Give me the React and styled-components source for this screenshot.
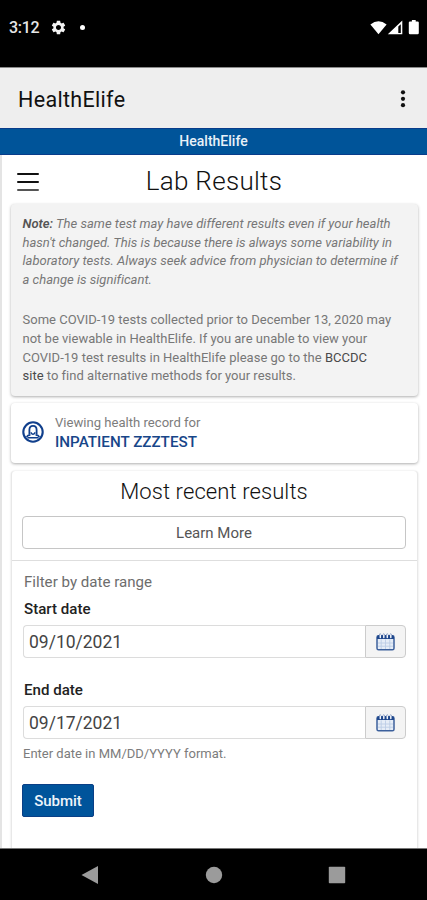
import React, { useState } from 'react';
import styled, { createGlobalStyle } from 'styled-components';

const App = () => {
  const [startDate, setStartDate] = useState('09/10/2021');
  const [endDate, setEndDate] = useState('09/17/2021');

  return (
    <Screen>
      <GlobalStyle />
      <StatusBar>
        <Clock>3:12</Clock>
        <GearIcon />
        <Dot />
        <StatusIcons />
      </StatusBar>

      <AppBar>
        <AppName>HealthElife</AppName>
        <MoreIcon />
      </AppBar>
      <Banner>HealthElife</Banner>

      <Page>
        <TitleRow>
          <MenuButton aria-label="Menu">
            <MenuLine />
            <MenuLine />
            <MenuLine $light />
          </MenuButton>
          <Title>Lab Results</Title>
        </TitleRow>

        <NoteCard>
          <NoteText $italic>
            <b>Note:</b> The same test may have different results even if your health
            <br />
            hasn't changed. This is because there is always some variability in
            <br />
            laboratory tests. Always seek advice from physician to determine if
            <br />a change is significant.
          </NoteText>
          <NoteText>
            Some COVID-19 tests collected prior to December 13, 2020 may
            <br />
            not be viewable in HealthElife. If you are unable to view your
            <br />
            COVID-19 test results in HealthElife please go to the <NoteLink>BCCDC</NoteLink>
            <br />
            <NoteLink>site</NoteLink> to find alternative methods for your results.
          </NoteText>
        </NoteCard>

        <RecordCard>
          <PersonIcon />
          <div>
            <RecordLabel>Viewing health record for</RecordLabel>
            <RecordName>INPATIENT ZZZTEST</RecordName>
          </div>
        </RecordCard>

        <ResultsCard>
          <ResultsHead>
            <ResultsTitle>Most recent results</ResultsTitle>
            <LearnButton>Learn More</LearnButton>
          </ResultsHead>
          <FilterForm onSubmit={(e) => e.preventDefault()}>
            <FilterTitle>Filter by date range</FilterTitle>
            <DateField
              id="start"
              label="Start date"
              value={startDate}
              onChange={setStartDate}
            />
            <DateField
              id="end"
              label="End date"
              value={endDate}
              onChange={setEndDate}
            />
            <Hint>Enter date in MM/DD/YYYY format.</Hint>
            <SubmitButton type="submit">Submit</SubmitButton>
          </FilterForm>
        </ResultsCard>
      </Page>

      <NavBar>
        <svg width="18" height="20" viewBox="0 0 18 20">
          <path d="M0.5 10 L17 1 V19 Z" fill="#9b9b9b" />
        </svg>
        <svg width="18" height="18" viewBox="0 0 18 18">
          <circle cx="9" cy="9" r="8.2" fill="#9b9b9b" />
        </svg>
        <svg width="18" height="18" viewBox="0 0 18 18">
          <rect x="0.8" y="0.8" width="16.4" height="16.4" rx="0.8" fill="#9b9b9b" />
        </svg>
      </NavBar>
    </Screen>
  );
};

export default App;

const DateField = ({ id, label, value, onChange }) => (
  <Field>
    <Label htmlFor={id}>{label}</Label>
    <InputGroup>
      <Input id={id} value={value} onChange={(e) => onChange(e.target.value)} />
      <CalendarButton type="button" aria-label={label}>
        <CalendarIcon />
      </CalendarButton>
    </InputGroup>
  </Field>
);

const GearIcon = () => (
  <svg width="17" height="17" viewBox="0 0 24 24" fill="#f4f4f4">
    <path d="M19.14 12.94c.04-.3.06-.61.06-.94 0-.32-.02-.64-.07-.94l2.03-1.58c.18-.14.23-.41.12-.61l-1.92-3.32c-.12-.22-.37-.29-.59-.22l-2.39.96c-.5-.38-1.03-.7-1.62-.94l-.36-2.54c-.04-.24-.24-.41-.48-.41h-3.84c-.24 0-.43.17-.47.41l-.36 2.54c-.59.24-1.13.57-1.62.94l-2.39-.96c-.22-.08-.47 0-.59.22L2.74 8.87c-.12.21-.08.47.12.61l2.03 1.58c-.05.3-.09.63-.09.94s.02.64.07.94l-2.03 1.58c-.18.14-.23.41-.12.61l1.92 3.32c.12.22.37.29.59.22l2.39-.96c.5.38 1.03.7 1.62.94l.36 2.54c.05.24.24.41.48.41h3.84c.24 0 .44-.17.47-.41l.36-2.54c.59-.24 1.13-.56 1.62-.94l2.39.96c.22.08.47 0 .59-.22l1.92-3.32c.12-.22.07-.47-.12-.61l-2.01-1.58zM12 15.6c-1.98 0-3.6-1.62-3.6-3.6s1.62-3.6 3.6-3.6 3.6 1.62 3.6 3.6-1.62 3.6-3.6 3.6z" />
  </svg>
);

// wifi, signal and battery
const StatusIcons = () => (
  <svg width="50" height="16" viewBox="0 0 50 16" fill="#fff">
    <path d="M0.4 4.4 Q8.5 -1.9 16.6 4.4 L8.5 14.3 Z" />
    <path
      fillRule="evenodd"
      d="M17.8 14.3 L32.3 0.4 V14.3 Z M28.3 6.4 V12.9 H30.8 V4.2 Z"
    />
    <path d="M41.9 0 H45.7 V1.4 H47.6 Q48.8 1.4 48.8 2.6 V13 Q48.8 14.2 47.6 14.2 H40 Q38.8 14.2 38.8 13 V2.6 Q38.8 1.4 40 1.4 H41.9 Z" />
  </svg>
);

const MoreIcon = () => (
  <svg width="6" height="20" viewBox="0 0 6 20" fill="#111">
    <circle cx="3" cy="3.3" r="2.1" />
    <circle cx="3" cy="9.8" r="2.1" />
    <circle cx="3" cy="16.2" r="2.1" />
  </svg>
);

const PersonIcon = () => (
  <svg width="22" height="22" viewBox="0 0 22 22" fill="none" stroke="#103f8c">
    <circle cx="11" cy="11" r="9.7" strokeWidth="2.1" />
    <path
      d="M7.4 13.6 V8.8 Q7.4 4.9 11 4.9 Q14.6 4.9 14.6 8.8 V13.6"
      strokeWidth="1.8"
    />
    <path d="M8.8 11.4 Q11 15.2 13.2 11.4" strokeWidth="1.5" />
    <path d="M4.6 16 Q5.6 14.2 8.4 13.9 M17.4 16 Q16.4 14.2 13.6 13.9 M5.6 16.8 H16.4" strokeWidth="1.6" />
  </svg>
);

const CalendarIcon = () => (
  <svg width="19" height="18" viewBox="0 0 19 18">
    <rect x="1" y="2.8" width="17" height="14" rx="1.6" fill="#e6edf7" stroke="#3c609c" strokeWidth="1.5" />
    <path d="M1 6 V4 Q1 2.2 2.8 2.2 H16.2 Q18 2.2 18 4 V6 Z" fill="#1f478c" />
    <path d="M5.2 6.4 V16 M9.5 6.4 V16 M13.8 6.4 V16 M2 10 H17 M2 13.2 H17" stroke="#bccde5" strokeWidth="0.9" />
    <path d="M4.3 1.6 V4.4 M7.8 1.6 V4.4 M11.3 1.6 V4.4 M14.8 1.6 V4.4" stroke="#f2f5fa" strokeWidth="1.5" strokeLinecap="round" />
    <path d="M3 1.7 Q4.2 -0.1 5.3 1.7 M6.6 1.7 Q7.8 -0.1 8.9 1.7 M10.1 1.7 Q11.3 -0.1 12.4 1.7 M13.6 1.7 Q14.8 -0.1 15.9 1.7" stroke="#6d87b4" strokeWidth="0.8" fill="none" />
  </svg>
);

// Styled Components
const GlobalStyle = createGlobalStyle`
  * {
    box-sizing: border-box;
  }

  body {
    margin: 0;
    background: #fff;
    font-family: Roboto, 'Liberation Sans', sans-serif;
  }

  button,
  input {
    font-family: inherit;
  }
`;

const Screen = styled.div`
  display: flex;
  flex-direction: column;
  width: 427px;
  height: 900px;
  overflow: hidden;
`;

const StatusBar = styled.div`
  display: flex;
  flex: none;
  align-items: center;
  height: 67px;
  padding: 0 7px 12px 9px;
  background: #000;
`;

const Clock = styled.span`
  width: 41px;
  color: #e6e6e6;
  font-size: 16px;
  font-weight: 500;
  line-height: 20px;
  letter-spacing: -0.3px;
`;

const Dot = styled.span`
  width: 5px;
  height: 5px;
  margin: 0 auto 0 13px;
  border-radius: 50%;
  background: #fff;
`;

const AppBar = styled.header`
  display: flex;
  flex: none;
  align-items: center;
  justify-content: space-between;
  height: 61px;
  padding: 2px 21px 0 18px;
  border-top: 1px solid #8a8a8a;
  background: #eee;
`;

const AppName = styled.span`
  color: #111;
  font-size: 21.5px;
  font-weight: 400;
  letter-spacing: 0.32px;
`;

const Banner = styled.div`
  flex: none;
  height: 27px;
  border: solid #083c8a;
  border-width: 1px 0;
  background: #005499;
  color: #e9f1f8;
  font-size: 14px;
  font-weight: 500;
  line-height: 25px;
  text-align: center;
`;

const Page = styled.main`
  display: flex;
  flex: 1;
  flex-direction: column;
  min-height: 0;
  padding: 0 9px 0 8px;
  border-left: 2px solid #e4e4e4;
`;

const TitleRow = styled.div`
  display: grid;
  flex: none;
  grid-template-columns: 23px 1fr 23px;
  align-items: center;
  height: 49px;
  padding: 2px 7px 0;
`;

const MenuButton = styled.button`
  display: flex;
  flex-direction: column;
  gap: 6px;
  width: 22px;
  padding: 3px 0 0;
  border: 0;
  background: none;
`;

const MenuLine = styled.span`
  height: 2px;
  border-radius: 1px;
  background: ${({ $light }) => ($light ? '#555' : '#111')};
`;

const Title = styled.h1`
  margin: 0;
  color: #111;
  font-size: 26px;
  font-weight: 300;
  text-align: center;
  letter-spacing: 0.3px;
`;

const Card = styled.section`
  flex: none;
  margin: 0 0 7px 1px;
  border-radius: 4px;
  background: #fff;
  box-shadow: 0 1px 3px rgba(0, 0, 0, 0.32);
`;

const NoteCard = styled(Card)`
  height: 192px;
  padding: 11px 11.5px;
  background: #f3f3f3;
`;

const NoteText = styled.p`
  margin: 0 0 22px;
  color: #777;
  font-size: 13px;
  font-style: ${({ $italic }) => ($italic ? 'italic' : 'normal')};
  line-height: 18.6px;
  letter-spacing: 0.01px;
  white-space: nowrap;

  b {
    color: #555;
    font-weight: 600;
  }
`;

const NoteLink = styled.a`
  color: #4a4a4a;
`;

const RecordCard = styled(Card)`
  display: flex;
  gap: 11px;
  align-items: center;
  height: 60px;
  padding: 0 11px 2px;
  margin-bottom: 8px;
`;

const RecordLabel = styled.div`
  color: #7c7c7c;
  font-size: 13.1px;
  line-height: 20px;
`;

const RecordName = styled.div`
  color: #174689;
  font-size: 15.2px;
  font-weight: 500;
  line-height: 19px;
`;

const ResultsCard = styled(Card)`
  flex: 1;
  margin-bottom: 0;
  border: solid #e8e8e8;
  border-width: 0 1px;
  border-radius: 4px 4px 0 0;
  box-shadow: 0 0 2px rgba(0, 0, 0, 0.16);
`;

const ResultsHead = styled.div`
  height: 90px;
  padding: 6px 11px 0 10px;
  border-bottom: 1px solid #dedede;
`;

const ResultsTitle = styled.h2`
  margin: 0 0 9px;
  color: #111;
  font-size: 22px;
  font-weight: 300;
  line-height: 30px;
  text-align: center;
  letter-spacing: 0.1px;
`;

const LearnButton = styled.button`
  width: 100%;
  height: 33px;
  border: 1px solid #c6c6c6;
  border-radius: 4px;
  background: #fff;
  color: #555;
  font-size: 15px;
`;

const FilterForm = styled.form`
  padding: 11px 11px 0;
`;

const FilterTitle = styled.div`
  margin: 0 0 7px 1px;
  color: #6d6d6d;
  font-size: 15.1px;
  line-height: 20px;
`;

const Field = styled.div`
  margin-bottom: 22px;

  & + & {
    margin-bottom: 5px;
  }
`;

const Label = styled.label`
  display: block;
  margin: 0 0 6px 1px;
  color: #222;
  font-size: 15.1px;
  font-weight: 500;
  line-height: 20px;
`;

const InputGroup = styled.div`
  display: flex;
  height: 33px;
`;

const Input = styled.input`
  flex: 1;
  min-width: 0;
  padding: 0 5px;
  border: 1px solid #dcdcdc;
  border-right: 0;
  border-radius: 4px 0 0 4px;
  outline: 0;
  background: #fff;
  color: #444;
  font-size: 17.5px;
`;

const CalendarButton = styled.button`
  display: flex;
  align-items: center;
  justify-content: center;
  width: 41px;
  padding: 1px 0 0;
  border: 1px solid #ccc;
  border-radius: 0 4px 4px 0;
  background: #f4f4f4;
`;

const Hint = styled.div`
  margin-bottom: 20px;
  color: #7c7c7c;
  font-size: 13px;
  line-height: 20px;
`;

const SubmitButton = styled.button`
  width: 72px;
  height: 33px;
  margin-left: -1px;
  padding: 0;
  border: 1px solid #0a3f86;
  border-radius: 2px;
  background: #00549b;
  color: #eef4fa;
  font-size: 15px;
  font-weight: 500;
`;

const NavBar = styled.nav`
  display: flex;
  flex: none;
  align-items: center;
  justify-content: space-between;
  height: 52px;
  padding: 0 81px;
  border-top: 1px solid #777;
  background: #000;
`;
